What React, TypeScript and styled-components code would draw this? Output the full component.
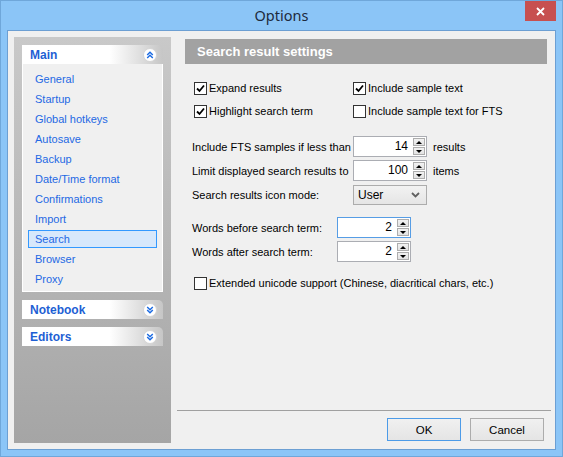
import React from 'react';
import styled, { createGlobalStyle } from 'styled-components';

const GlobalStyle = createGlobalStyle`
  html, body {
    margin: 0;
    padding: 0;
  }
  body {
    font-family: "Liberation Sans", Arial, sans-serif;
    font-size: 11px;
    color: #000;
  }
`;

const Window = styled.div`
  width: 563px;
  height: 457px;
  box-sizing: border-box;
  background: #8bc5f7;
  border: 1px solid #6fa7da;
  padding: 0 6px 6px 6px;
  display: flex;
  flex-direction: column;
`;

const TitleBar = styled.div`
  height: 29px;
  display: grid;
  grid-template-columns: 1fr auto 1fr;
  align-items: start;
`;

const Title = styled.div`
  grid-column: 2;
  font-family: "Noto Sans", "Open Sans", sans-serif;
  font-size: 14.5px;
  color: #1d2a3d;
  line-height: 29px;
`;

const CloseButton = styled.div`
  grid-column: 3;
  justify-self: end;
  width: 31px;
  height: 20px;
  background: #c75050;
  display: flex;
  align-items: center;
  justify-content: center;
`;

const Client = styled.div`
  flex: 1;
  display: flex;
  background: #f0f0f0;
  border: 1px solid #6c9fd3;
  padding-left: 6px;
  min-height: 0;
`;

const LeftPanel = styled.div`
  width: 157px;
  box-sizing: border-box;
  margin: 6px 0;
  padding: 8px;
  background: linear-gradient(#c9c9c9, #a5a5a5);
  display: flex;
  flex-direction: column;
  gap: 8px;
`;

const GroupHeader = styled.div`
  height: 19px;
  display: flex;
  align-items: center;
  justify-content: space-between;
  padding: 0 6px 0 8px;
  border-radius: 0 5px 0 0;
  background: linear-gradient(to right, #ffffff 0%, #ffffff 62%, #c6c6c6 100%);
  font-weight: bold;
  font-size: 12px;
  color: #1e5fd4;
`;

const Chevron = styled.svg`
  display: block;
`;

const Items = styled.div`
  background: #f0f0f0;
  border: 1px solid #ffffff;
  border-top: none;
  padding: 6px 5px 3px 5px;
  display: flex;
  flex-direction: column;
  gap: 2px;
`;

const Item = styled.div<{ $active?: boolean }>`
  height: 18px;
  box-sizing: border-box;
  line-height: 16px;
  padding-left: 6px;
  font-size: 11px;
  color: #2469e4;
  border: 1px solid ${(p) => (p.$active ? '#3399ff' : 'transparent')};
  background: ${(p) => (p.$active ? '#d7e8fb' : 'transparent')};
`;

const RightPane = styled.div`
  flex: 1;
  display: flex;
  flex-direction: column;
  padding: 8px 4px 8px 6px;
`;

const Content = styled.div`
  flex: 1;
  padding: 0 4px 0 8px;
`;

const SectionHeader = styled.div`
  height: 25px;
  line-height: 25px;
  background: #a2a2a2;
  color: #fff;
  font-weight: bold;
  font-size: 13px;
  padding-left: 12px;
`;

const CheckGrid = styled.div`
  margin-top: 14px;
  padding-left: 9px;
  display: grid;
  grid-template-columns: 159px auto;
  grid-auto-rows: 20px;
  row-gap: 3px;
`;

const CheckRow = styled.label<{ $top?: number }>`
  display: flex;
  align-items: center;
  gap: 2px;
  height: 20px;
  white-space: nowrap;
  margin-top: ${(p) => p.$top ?? 0}px;
  padding-left: ${(p) => (p.$top ? 9 : 0)}px;
`;

const Box = styled.span`
  width: 13px;
  height: 13px;
  box-sizing: border-box;
  border: 1px solid #333;
  background: #fff;
  display: flex;
  align-items: center;
  justify-content: center;
`;

const FormBlock = styled.div<{ $top: number; $label: number }>`
  margin-top: ${(p) => p.$top}px;
  padding-left: 7px;
  display: grid;
  grid-template-columns: ${(p) => p.$label}px 74px auto;
  grid-auto-rows: 21px;
  row-gap: 3px;
  align-items: center;
  white-space: nowrap;
`;

const Suffix = styled.span`
  padding-left: 6px;
`;

const SpinBox = styled.div<{ $focus?: boolean }>`
  height: 21px;
  box-sizing: border-box;
  border: 1px solid ${(p) => (p.$focus ? '#569de5' : '#abadb3')};
  background: #fff;
  display: flex;
  align-items: stretch;
`;

const SpinValue = styled.div`
  flex: 1;
  text-align: right;
  padding-right: 5px;
  line-height: 19px;
  font-size: 12px;
`;

const SpinButtons = styled.div`
  width: 12px;
  margin: 1px 1px 1px 0;
  display: flex;
  flex-direction: column;
  gap: 1px;
`;

const SpinButton = styled.div<{ $down?: boolean }>`
  flex: 1;
  border: 1px solid #adadad;
  background: linear-gradient(#f2f2f2, #e3e3e3);
  display: flex;
  align-items: center;
  justify-content: center;
  &::after {
    content: '';
    width: 0;
    height: 0;
    border-left: 3px solid transparent;
    border-right: 3px solid transparent;
    ${(p) => (p.$down ? 'border-top: 3px solid #000;' : 'border-bottom: 3px solid #000;')}
  }
`;

const Select = styled.div`
  height: 20px;
  box-sizing: border-box;
  border: 1px solid #acacac;
  background: linear-gradient(#f2f2f2, #e5e5e5);
  display: flex;
  align-items: center;
  justify-content: space-between;
  padding: 0 6px 0 4px;
  font-size: 12px;
`;

const Footer = styled.div`
  border-top: 1px solid #a0a0a0;
  padding: 7px 7px 0 0;
  display: flex;
  justify-content: flex-end;
  gap: 9px;
`;

const Button = styled.div<{ $default?: boolean }>`
  width: 74px;
  height: 23px;
  box-sizing: border-box;
  border: 1px solid ${(p) => (p.$default ? '#4c9be8' : '#acacac')};
  background: linear-gradient(#f0f0f0, #e5e5e5);
  display: flex;
  align-items: center;
  justify-content: center;
  font-size: 11.5px;
`;

const Check = ({ on }: { on?: boolean }) => (
  <Box>
    {on && (
      <svg width="9" height="9" viewBox="0 0 9 9">
        <path d="M1 4.5 L3.5 7 L8 1.5" fill="none" stroke="#000" strokeWidth="1.8" />
      </svg>
    )}
  </Box>
);

const ChevronIcon = ({ up }: { up?: boolean }) => (
  <Chevron width="14" height="14" viewBox="0 0 14 14">
    <circle cx="7" cy="7" r="6.5" fill="#fff" stroke="#d4d4d4" />
    {up ? (
      <g fill="none" stroke="#1a6ae2" strokeWidth="1.4">
        <polyline points="4.2,7 7,4.2 9.8,7" />
        <polyline points="4.2,10 7,7.2 9.8,10" />
      </g>
    ) : (
      <g fill="none" stroke="#1a6ae2" strokeWidth="1.4">
        <polyline points="4.2,4 7,6.8 9.8,4" />
        <polyline points="4.2,7 7,9.8 9.8,7" />
      </g>
    )}
  </Chevron>
);

const Spin = ({ value, focus }: { value: string; focus?: boolean }) => (
  <SpinBox $focus={focus}>
    <SpinValue>{value}</SpinValue>
    <SpinButtons>
      <SpinButton />
      <SpinButton $down />
    </SpinButtons>
  </SpinBox>
);

const mainItems = [
  'General',
  'Startup',
  'Global hotkeys',
  'Autosave',
  'Backup',
  'Date/Time format',
  'Confirmations',
  'Import',
  'Search',
  'Browser',
  'Proxy',
];

const App = () => {
  return (
    <>
      <GlobalStyle />
      <Window>
        <TitleBar>
          <Title>Options</Title>
          <CloseButton>
            <svg width="9" height="9" viewBox="0 0 9 9">
              <path d="M1 1 L8 8 M8 1 L1 8" stroke="#fff" strokeWidth="1.8" />
            </svg>
          </CloseButton>
        </TitleBar>
        <Client>
          <LeftPanel>
            <div>
              <GroupHeader>
                <span>Main</span>
                <ChevronIcon up />
              </GroupHeader>
              <Items>
                {mainItems.map((name) => (
                  <Item key={name} $active={name === 'Search'}>
                    {name}
                  </Item>
                ))}
              </Items>
            </div>
            <GroupHeader>
              <span>Notebook</span>
              <ChevronIcon />
            </GroupHeader>
            <GroupHeader>
              <span>Editors</span>
              <ChevronIcon />
            </GroupHeader>
          </LeftPanel>
          <RightPane>
            <Content>
              <SectionHeader>Search result settings</SectionHeader>
              <CheckGrid>
                <CheckRow>
                  <Check on />
                  Expand results
                </CheckRow>
                <CheckRow>
                  <Check on />
                  Include sample text
                </CheckRow>
                <CheckRow>
                  <Check on />
                  Highlight search term
                </CheckRow>
                <CheckRow>
                  <Check />
                  Include sample text for FTS
                </CheckRow>
              </CheckGrid>
              <FormBlock $top={15} $label={161}>
                <span>Include FTS samples if less than</span>
                <Spin value="14" />
                <Suffix>results</Suffix>
                <span>Limit displayed search results to</span>
                <Spin value="100" />
                <Suffix>items</Suffix>
                <span>Search results icon mode:</span>
                <Select>
                  <span>User</span>
                  <svg width="9" height="6" viewBox="0 0 9 6">
                    <polyline points="1,1 4.5,4.5 8,1" fill="none" stroke="#606060" strokeWidth="1.8" />
                  </svg>
                </Select>
                <span />
              </FormBlock>
              <FormBlock $top={12} $label={145}>
                <span>Words before search term:</span>
                <Spin value="2" focus />
                <span />
                <span>Words after search term:</span>
                <Spin value="2" />
                <span />
              </FormBlock>
              <CheckRow $top={11}>
                <Check />
                Extended unicode support (Chinese, diacritical chars, etc.)
              </CheckRow>
            </Content>
            <Footer>
              <Button $default>OK</Button>
              <Button>Cancel</Button>
            </Footer>
          </RightPane>
        </Client>
      </Window>
    </>
  );
};

export default App;
